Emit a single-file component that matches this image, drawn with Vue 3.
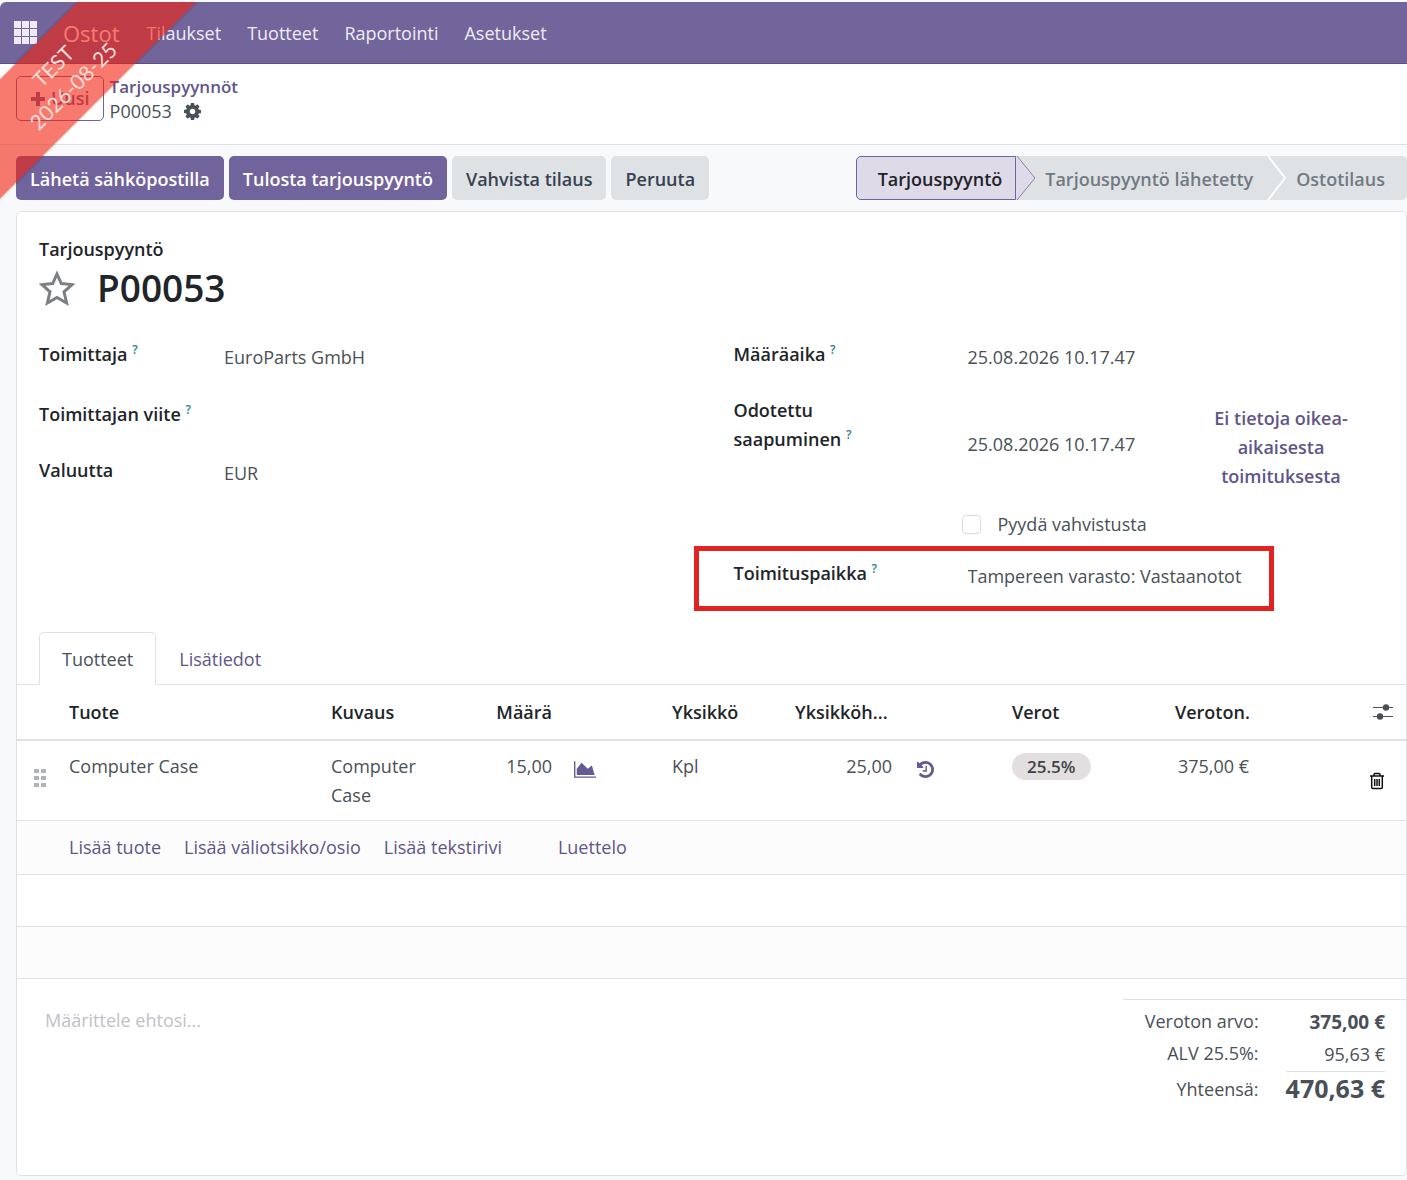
<template>
	<div class="page">
		<div class="ribbon-area">
			<div class="ribbon">TEST<br />2026-08-25</div>
		</div>

		<nav class="navbar">
			<button class="apps" type="button" aria-label="Sovellukset">
				<svg viewBox="0 0 24 24" width="24" height="24" fill="currentColor">
					<template v-for="row in 3" :key="row">
						<rect v-for="col in 3" :key="col" :x="(col - 1) * 8" :y="(row - 1) * 8" width="7" height="7" />
					</template>
				</svg>
			</button>
			<a class="brand" href="#">Ostot</a>
			<a v-for="item in menu" :key="item" class="menu-link" href="#">{{ item }}</a>
		</nav>

		<header class="control-panel">
			<button class="new-button" type="button">
				<svg viewBox="0 0 16 16" width="16" height="16" fill="currentColor">
					<path d="M6 1h4v5h5v4h-5v5H6v-5H1V6h5z" />
				</svg>
				Uusi
			</button>
			<div class="breadcrumb">
				<a href="#">Tarjouspyynnöt</a>
				<div class="current">
					<span>P00053</span>
					<button class="plain" type="button" aria-label="Toiminnot">
						<svg viewBox="128 128 1536 1536" width="17" height="17" fill="currentColor">
							<path d="M1152 896q0-106-75-181t-181-75-181 75-75 181 75 181 181 75 181-75 75-181zm512-109v222q0 12-8 23t-20 13l-185 28q-19 54-39 91 35 50 107 138 10 12 10 25t-9 23q-27 37-99 108t-94 71q-12 0-26-9l-138-108q-44 23-91 38-16 136-29 186-7 28-36 28h-222q-14 0-24.5-8.5t-11.5-21.5l-28-184q-49-16-90-37l-141 107q-10 9-25 9-14 0-25-11-126-114-165-168-7-10-7-23 0-12 8-23 15-21 51-66.5t54-70.5q-27-50-41-99l-183-27q-13-2-21-12.5t-8-23.5v-222q0-12 8-23t19-13l186-28q14-46 39-92-40-57-107-138-10-12-10-24 0-10 9-23 26-36 98.5-107.5t94.5-71.5q13 0 26 10l138 107q44-23 91-38 16-136 29-186 7-28 36-28h222q14 0 24.5 8.5t11.5 21.5l28 184q49 16 90 37l142-107q9-9 24-9 13 0 25 10 129 119 165 170 7 8 7 22 0 12-8 23-15 21-51 66.5t-54 70.5q26 50 41 98l183 28q13 2 21 12.5t8 23.5z" />
						</svg>
					</button>
				</div>
			</div>
		</header>

		<div class="statusbar">
			<div class="actions">
				<button class="btn primary" type="button">Lähetä sähköpostilla</button>
				<button class="btn primary" type="button">Tulosta tarjouspyyntö</button>
				<button class="btn" type="button">Vahvista tilaus</button>
				<button class="btn" type="button">Peruuta</button>
			</div>
			<div class="stages">
				<button class="stage active" type="button">Tarjouspyyntö</button>
				<svg class="arrow" viewBox="0 0 20 44" width="20" height="44">
					<path d="M0 0L19 22L0 44z" fill="#dedae8" />
					<path d="M1 0L19 22L1 44" fill="none" stroke="#8a80ad" />
				</svg>
				<button class="stage" type="button">Tarjouspyyntö lähetetty</button>
				<svg class="arrow" viewBox="0 0 20 44" width="20" height="44">
					<path d="M1 0L18 22L1 44" fill="none" stroke="#fff" stroke-width="2" />
				</svg>
				<button class="stage last" type="button">Ostotilaus</button>
			</div>
		</div>

		<main class="sheet">
			<div class="title-block">
				<span class="doc-type">Tarjouspyyntö</span>
				<div class="title-row">
					<button class="plain star" type="button" aria-label="Prioriteetti">
						<svg viewBox="0 0 36 36" width="36" height="36" fill="none" stroke="currentColor" stroke-width="3">
							<path d="M18 4L22.300 13.500L33 14.600L25 21.800L27.600 33L18 27.500L8.400 33L11 21.800L3 14.600L13.700 13.500z" />
						</svg>
					</button>
					<h1>P00053</h1>
				</div>
			</div>

			<div class="groups">
				<div class="group left">
					<div class="field">
						<label for="partner">Toimittaja <sup>?</sup></label>
						<input id="partner" v-model="order.partner" type="text" />
					</div>
					<div class="field">
						<label for="ref">Toimittajan viite <sup>?</sup></label>
						<input id="ref" v-model="order.ref" type="text" />
					</div>
					<div class="field">
						<label for="currency">Valuutta</label>
						<input id="currency" v-model="order.currency" type="text" />
					</div>
				</div>
				<div class="group right">
					<div class="field">
						<label for="deadline">Määräaika <sup>?</sup></label>
						<input id="deadline" v-model="order.deadline" type="text" />
					</div>
					<div class="field arrival">
						<label for="arrival">Odotettu saapuminen <sup>?</sup></label>
						<input id="arrival" v-model="order.arrival" type="text" />
						<button class="plain on-time" type="button">Ei tietoja oikea-aikaisesta toimituksesta</button>
					</div>
					<div class="confirm">
						<input id="confirm" v-model="order.confirm" type="checkbox" />
						<label for="confirm">Pyydä vahvistusta</label>
					</div>
					<div class="field highlighted">
						<label for="place">Toimituspaikka <sup>?</sup></label>
						<input id="place" v-model="order.place" type="text" />
					</div>
				</div>
			</div>

			<div class="tabs" role="tablist">
				<button class="tab active" type="button" role="tab" aria-selected="true">Tuotteet</button>
				<button class="tab" type="button" role="tab" aria-selected="false">Lisätiedot</button>
			</div>

			<table class="lines">
				<colgroup>
					<col class="c-handle" />
					<col />
					<col class="c-desc" />
					<col class="c-qty" />
					<col class="c-icon" />
					<col class="c-unit" />
					<col class="c-price" />
					<col class="c-icon" />
					<col class="c-tax" />
					<col class="c-total" />
					<col class="c-tools" />
				</colgroup>
				<thead>
					<tr>
						<th></th>
						<th>Tuote</th>
						<th>Kuvaus</th>
						<th class="num">Määrä</th>
						<th></th>
						<th>Yksikkö</th>
						<th>Yksikköh...</th>
						<th></th>
						<th>Verot</th>
						<th class="num">Veroton.</th>
						<th class="tools">
							<button class="plain" type="button" aria-label="Sarakkeet">
								<svg viewBox="0 0 20 18" width="20" height="18" fill="currentColor">
									<path d="M0 4h20v1H0zM0 13h20v1H0z" />
									<circle cx="13" cy="4.500" r="3.200" />
									<circle cx="7" cy="13.500" r="3.200" />
								</svg>
							</button>
						</th>
					</tr>
				</thead>
				<tbody>
					<tr v-for="line in lines" :key="line.product" class="line">
						<td class="handle">
							<svg viewBox="0 0 12 18" width="12" height="18" fill="currentColor">
								<path d="M0 0h5v4H0zM7 0h5v4H7zM0 7h5v4H0zM7 7h5v4H7zM0 14h5v4H0zM7 14h5v4H7z" />
							</svg>
						</td>
						<td>{{ line.product }}</td>
						<td>{{ line.description }}</td>
						<td class="num">{{ line.quantity }}</td>
						<td class="icon">
							<button class="plain" type="button" aria-label="Ennuste">
								<svg viewBox="0 128 2048 1536" width="22" height="17" fill="currentColor">
									<path d="M2048 1536v128h-2048v-1536h128v1408h1920zm-384-1024l256 896h-1664v-576l448-576 576 576z" />
								</svg>
							</button>
						</td>
						<td>{{ line.unit }}</td>
						<td class="num">{{ line.price }}</td>
						<td class="icon history">
							<button class="plain" type="button" aria-label="Ostohistoria">
								<svg viewBox="128 128 1536 1536" width="17" height="17" fill="currentColor">
									<path d="M1664 896q0 156-61 298t-164 245-245 164-298 61q-172 0-327-72.5t-264-204.5q-7-10-6.5-22.5t8.5-20.5l137-138q10-9 25-9 16 2 23 12 73 95 179 147t225 52q104 0 198.5-40.5t163.5-109.5 109.5-163.5 40.5-198.5-40.5-198.5-109.5-163.5-163.5-109.5-198.5-40.5q-98 0-188 35.5t-160 101.5l137 138q31 30 14 69-17 40-59 40h-448q-26 0-45-19t-19-45v-448q0-42 40-59 39-17 69 14l130 129q107-101 244.5-156.5t284.5-55.5q156 0 298 61t245 164 164 245 61 298zm-640-288v448q0 14-9 23t-23 9h-320q-14 0-23-9t-9-23v-64q0-14 9-23t23-9h224v-352q0-14 9-23t23-9h64q14 0 23 9t9 23z" />
								</svg>
							</button>
						</td>
						<td><span class="tag">{{ line.tax }}</span></td>
						<td class="num">{{ line.total }}</td>
						<td class="tools trash">
							<button class="plain" type="button" aria-label="Poista rivi">
								<svg viewBox="0 0 16 18" width="16" height="18" fill="none" stroke="currentColor" stroke-width="1.500">
									<path d="M1 4h14M5 4V2.500Q5 1.500 6 1.500h4Q11 1.500 11 2.500V4M2.700 4v11.500Q2.700 16.500 3.700 16.500h8.600Q13.300 16.500 13.300 15.500V4M5.700 7v7M8 7v7M10.300 7v7" />
								</svg>
							</button>
						</td>
					</tr>
					<tr class="adders">
						<td></td>
						<td colspan="10">
							<div class="adder-links">
								<a href="#">Lisää tuote</a>
								<a href="#">Lisää väliotsikko/osio</a>
								<a href="#">Lisää tekstirivi</a>
								<a class="catalog" href="#">Luettelo</a>
							</div>
						</td>
					</tr>
					<tr class="blank"><td colspan="11"></td></tr>
					<tr class="blank shaded"><td colspan="11"></td></tr>
				</tbody>
			</table>

			<div class="bottom">
				<textarea v-model="order.notes" aria-label="Ehdot" placeholder="Määrittele ehtosi..."></textarea>
				<table class="totals">
					<tbody>
						<tr>
							<th>Veroton arvo:</th>
							<td><strong>375,00 €</strong></td>
						</tr>
						<tr>
							<th>ALV 25.5%:</th>
							<td>95,63 €</td>
						</tr>
						<tr class="grand">
							<th>Yhteensä:</th>
							<td><strong>470,63 €</strong></td>
						</tr>
					</tbody>
				</table>
			</div>
		</main>
	</div>
</template>

<script setup>
import { reactive } from 'vue';

const menu = ['Tilaukset', 'Tuotteet', 'Raportointi', 'Asetukset'];

const order = reactive({
	partner: 'EuroParts GmbH',
	ref: '',
	currency: 'EUR',
	deadline: '25.08.2026 10.17.47',
	arrival: '25.08.2026 10.17.47',
	confirm: false,
	place: 'Tampereen varasto: Vastaanotot',
	notes: ''
});

const lines = [
	{
		product: 'Computer Case',
		description: 'Computer Case',
		quantity: '15,00',
		unit: 'Kpl',
		price: '25,00',
		tax: '25.5%',
		total: '375,00 €'
	}
];
</script>

<style>
body {
	margin: 0;
	background: #f8f9fb;
}
</style>

<style scoped>
.page {
	position: relative;
	padding-top: 2px;
	padding-bottom: 4px;
	font-family: "Segoe UI", "Open Sans", "Noto Sans", sans-serif;
	font-size: 18px;
	line-height: 29px;
	color: #495057;
}

.page * {
	box-sizing: border-box;
}

button,
input,
textarea {
	font: inherit;
	color: inherit;
}

button {
	cursor: pointer;
}

svg {
	display: block;
	flex: none;
}

a {
	color: #5f5589;
	text-decoration: none;
}

.plain {
	border: 0;
	padding: 0;
	background: none;
}

.ribbon-area {
	position: absolute;
	inset: 2px auto auto 0;
	z-index: 5;
	width: 200px;
	height: 200px;
	overflow: hidden;
	pointer-events: none;
}

.ribbon {
	position: absolute;
	top: 27px;
	left: -82px;
	width: 300px;
	height: 84px;
	padding: 14px 14px 0 0;
	background: rgba(243, 33, 15, 0.6);
	box-shadow: 0 0 3px rgba(0, 0, 0, 0.3);
	transform: rotate(-45deg);
	font-family: Lato, sans-serif;
	font-size: 21px;
	line-height: 28px;
	text-align: center;
	color: #fbdcd6;
}

.navbar {
	display: flex;
	align-items: center;
	height: 62px;
	padding-left: 14px;
	background: #71659b;
	border-bottom: 1px solid #5b4f84;
	border-top-left-radius: 6px;
}

.apps {
	border: 0;
	padding: 0;
	background: none;
	color: #efeaf6;
}

.brand {
	margin-left: 25px;
	margin-right: 1px;
	padding-top: 2px;
	font-size: 22px;
	color: #fff;
}

.menu-link {
	margin-left: 26px;
	padding-top: 2px;
	color: #efecf5;
}

.control-panel {
	display: flex;
	gap: 6px;
	height: 81px;
	padding: 12px 16px 0;
	background: #fff;
	border-bottom: 1px solid #dee2e6;
}

.new-button {
	display: flex;
	align-items: center;
	gap: 5px;
	height: 45px;
	padding: 0 13px;
	border: 1px solid #71639e;
	border-radius: 5px;
	background: #fff;
	font-weight: 600;
	color: #71639e;
}

.breadcrumb {
	line-height: 25px;
	margin-top: -2px;
}

.breadcrumb a {
	font-size: 17px;
	font-weight: 600;
}

.current {
	display: flex;
	align-items: center;
	gap: 12px;
}

.statusbar {
	display: flex;
	justify-content: space-between;
	padding: 11px 0 11px 16px;
}

.actions,
.stages {
	display: flex;
}

.actions {
	gap: 5px;
}

.btn {
	height: 44px;
	padding: 2px 14px 0;
	border: 0;
	border-radius: 5px;
	background: #dee2e4;
	font-weight: 600;
	color: #374151;
}

.btn.primary {
	background: #71639b;
	color: #fff;
}

.stages {
	background: #dfe2e5;
	border-radius: 5px;
}

.stage {
	height: 44px;
	padding: 2px 14px 0 9px;
	border: 0;
	background: none;
	font-weight: 600;
	color: #717a82;
}

.stage.active {
	padding: 2px 13px 0 21px;
	border: 1px solid #71639e;
	border-radius: 5px 0 0 5px;
	background: #dedae8;
	color: #1f2328;
}

.stage.last {
	padding-right: 22px;
}

.sheet {
	min-height: 965px;
	margin-left: 16px;
	background: #fff;
	border: 1px solid #dee2e6;
	border-radius: 5px;
}

.title-block {
	padding: 23px 22px 0;
	color: #212529;
}

.doc-type {
	display: block;
	font-weight: 600;
}

.title-row {
	display: flex;
	align-items: center;
	gap: 22px;
	height: 47px;
}

.star {
	color: #7c7f83;
}

h1 {
	margin: 0;
	font-size: 37px;
	font-weight: 600;
}

.groups {
	display: grid;
	grid-template-columns: minmax(0, 1fr) minmax(0, 1fr);
	gap: 44px;
	padding: 29px 22px 0;
}

.field {
	display: flex;
	position: relative;
	min-height: 56px;
}

.left .field:first-child {
	min-height: 60px;
}

.field label {
	flex: none;
	width: 185px;
	font-weight: 600;
	color: #212529;
}

.right .field label {
	width: 234px;
	padding-right: 72px;
}

sup {
	font-size: 12px;
	line-height: 0;
	color: #2b7f9b;
}

.field input {
	flex: 1;
	min-width: 0;
	width: 100%;
	height: 29px;
	margin-top: 3px;
	padding: 0;
	border: 0;
	background: none;
	outline: none;
}

.right .arrival {
	min-height: 102px;
}

.arrival input {
	align-self: center;
	margin: 0 0 5px;
}

.on-time {
	flex: none;
	width: 206px;
	padding: 0 24px;
	font-weight: 600;
	color: #5f5589;
}

.confirm {
	display: flex;
	align-items: center;
	gap: 17px;
	height: 52px;
	padding-left: 228px;
}

.confirm input {
	appearance: none;
	width: 19px;
	height: 19px;
	margin: 0;
	border: 1px solid #d8dbdf;
	border-radius: 4px;
	background: #fff;
}

.highlighted {
	margin-top: 9px;
}

.highlighted::after {
	content: "";
	position: absolute;
	inset: -13px 110px 4px -40px;
	border: 5px solid #e32222;
	pointer-events: none;
}

.tabs {
	display: flex;
	margin-top: 17px;
	padding-left: 22px;
	border-bottom: 1px solid #dee2e6;
}

.tab {
	height: 53px;
	margin-bottom: -1px;
	padding: 2px 22px 0;
	border: 1px solid transparent;
	background: none;
	color: #5f5589;
}

.tab.active {
	border-color: #dee2e6 #dee2e6 #fff;
	border-radius: 5px 5px 0 0;
	background: #fff;
	color: #495057;
}

.lines {
	width: 100%;
	table-layout: fixed;
	border-collapse: collapse;
}

.c-handle { width: 41px; }
.c-desc { width: 144px; }
.c-qty { width: 99px; }
.c-icon { width: 98px; }
.c-unit { width: 123px; }
.c-price { width: 119px; }
.c-tax { width: 163px; }
.c-total { width: 96px; }
.c-tools { width: 146px; }

.lines th {
	height: 55px;
	padding: 0 11px;
	border-bottom: 2px solid #dee2e4;
	font-weight: 600;
	text-align: left;
	white-space: nowrap;
	color: #212529;
}

.lines td {
	padding: 11px 11px 10px;
	border-bottom: 1px solid #dee2e6;
	vertical-align: top;
}

.lines .num {
	text-align: right;
	white-space: nowrap;
}

.lines .handle {
	padding: 0 0 5px 17px;
	vertical-align: middle;
	color: #b0b3b8;
}

.lines .icon {
	padding: 16px 11px 0;
	color: #655a92;
}

.lines .history {
	padding-left: 14px;
}

.lines .tools {
	padding: 0 13px 0 0;
	color: #495057;
}

.tools .plain {
	display: block;
	margin-left: auto;
}

.lines .trash {
	padding-right: 21px;
	vertical-align: middle;
	color: #111;
}

.tag {
	display: inline-block;
	padding: 0 15px;
	border-radius: 14px;
	background: #e3dedf;
	font-size: 17px;
	line-height: 27px;
	font-weight: 600;
	color: #3f4347;
}

.lines .adders td {
	height: 54px;
	padding-top: 0;
	padding-bottom: 0;
	vertical-align: middle;
	background: #fcfcfd;
}

.adder-links {
	display: flex;
	gap: 23px;
}

.catalog {
	margin-left: 33px;
}

.lines .blank td {
	height: 52px;
	padding: 0;
}

.lines .shaded td {
	background: #fcfcfd;
}

.bottom {
	display: flex;
	align-items: flex-start;
	justify-content: space-between;
	gap: 28px;
	padding: 20px 0 0 28px;
}

textarea {
	flex: 1;
	height: 90px;
	margin-top: 7px;
	padding: 0;
	border: 0;
	background: none;
	outline: none;
	resize: none;
}

textarea::placeholder {
	color: #c0c2c5;
}

.totals {
	border-top: 1px solid #dee2e6;
	border-spacing: 0;
	padding: 7px 21px 0 22px;
}

.totals th {
	padding: 0 27px 3px 0;
	font-weight: 400;
	text-align: right;
}

.totals td {
	padding: 0 0 2px;
	text-align: right;
}

.totals strong {
	font-size: 19px;
}

.grand th,
.grand td {
	padding-top: 2px;
}

.grand td {
	border-top: 1px solid #dee2e6;
}

.totals .grand strong {
	font-size: 25px;
}
</style>
